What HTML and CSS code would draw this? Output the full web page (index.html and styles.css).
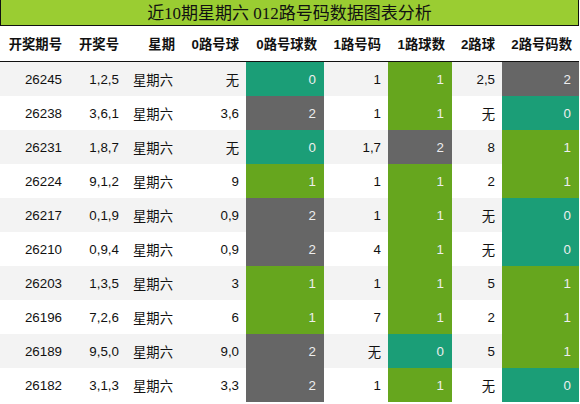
FILE: index.html
```html
<!DOCTYPE html>
<html>
<head>
    <meta charset="utf-8">
    <title>近10期星期六 012路号码数据图表分析</title>
    <link rel="stylesheet" href="styles.css">
</head>
<body>
    <div class="chart">
        <div class="title">近10期星期六 012路号码数据图表分析</div>
        <table class="data">
            <colgroup>
                <col style="width:69px">
                <col style="width:57px">
                <col style="width:56px">
                <col style="width:64px">
                <col style="width:78px">
                <col style="width:64px">
                <col style="width:64px">
                <col style="width:50px">
                <col style="width:77px">
            </colgroup>
            <thead>
                <tr>
                    <th>开奖期号</th>
                    <th>开奖号</th>
                    <th>星期</th>
                    <th>0路号球</th>
                    <th>0路号球数</th>
                    <th>1路号码</th>
                    <th>1路球数</th>
                    <th>2路球</th>
                    <th>2路号码数</th>
                </tr>
            </thead>
            <tbody id="rows"></tbody>
        </table>
    </div>

    <script>
        const draws = [
            ['26245', '1,2,5', '无', 0, '1', 1, '2,5', 2],
            ['26238', '3,6,1', '3,6', 2, '1', 1, '无', 0],
            ['26231', '1,8,7', '无', 0, '1,7', 2, '8', 1],
            ['26224', '9,1,2', '9', 1, '1', 1, '2', 1],
            ['26217', '0,1,9', '0,9', 2, '1', 1, '无', 0],
            ['26210', '0,9,4', '0,9', 2, '4', 1, '无', 0],
            ['26203', '1,3,5', '3', 1, '1', 1, '5', 1],
            ['26196', '7,2,6', '6', 1, '7', 1, '2', 1],
            ['26189', '9,5,0', '9,0', 2, '无', 0, '5', 1],
            ['26182', '3,1,3', '3,3', 2, '1', 1, '无', 0]
        ];

        function countCell(n) {
            return '<td class="count c' + n + '">' + n + '</td>';
        }

        const body = document.getElementById('rows');
        draws.forEach(d => {
            let row = document.createElement('tr');
            row.innerHTML =
                '<td>' + d[0] + '</td>' +
                '<td>' + d[1] + '</td>' +
                '<td>星期六</td>' +
                '<td>' + d[2] + '</td>' + countCell(d[3]) +
                '<td>' + d[4] + '</td>' + countCell(d[5]) +
                '<td>' + d[6] + '</td>' + countCell(d[7]);
            body.appendChild(row);
        });
    </script>
</body>
</html>
```

FILE: styles.css
```css
body {
    margin: 0;
    padding: 0;
    background-color: #ffffff;
    font-family: 'Liberation Sans', 'Noto Sans CJK SC', sans-serif;
}
.chart {
    width: 579px;
}
.title {
    height: 25px;
    line-height: 28px;
    background-color: #9acd32;
    border: 1px solid #111111;
    border-top: none;
    text-align: center;
    font-family: 'Liberation Serif', 'Noto Sans CJK SC', serif;
    font-size: 17px;
    color: #111111;
    overflow: hidden;
}
.data {
    width: 579px;
    table-layout: fixed;
    border-collapse: collapse;
    font-size: 13.33px;
    color: #111111;
}
.data th {
    height: 35px;
    padding: 0 7px 0 0;
    text-align: right;
    font-weight: bold;
    border-bottom: 1px solid #111111;
    white-space: nowrap;
}
.data td {
    height: 34px;
    padding: 0 7px 0 0;
    text-align: right;
    white-space: nowrap;
}
.data td:nth-child(3) {
    text-align: left;
    padding-left: 7px;
}
.data tbody tr:nth-child(odd) {
    background-color: #f3f3f3;
}
.data td.count {
    color: #eeeeee;
    padding-right: 8px;
}
.data td.c0 {
    background-color: #1b9e77;
}
.data td.c1 {
    background-color: #66a61e;
}
.data td.c2 {
    background-color: #666666;
}
```
